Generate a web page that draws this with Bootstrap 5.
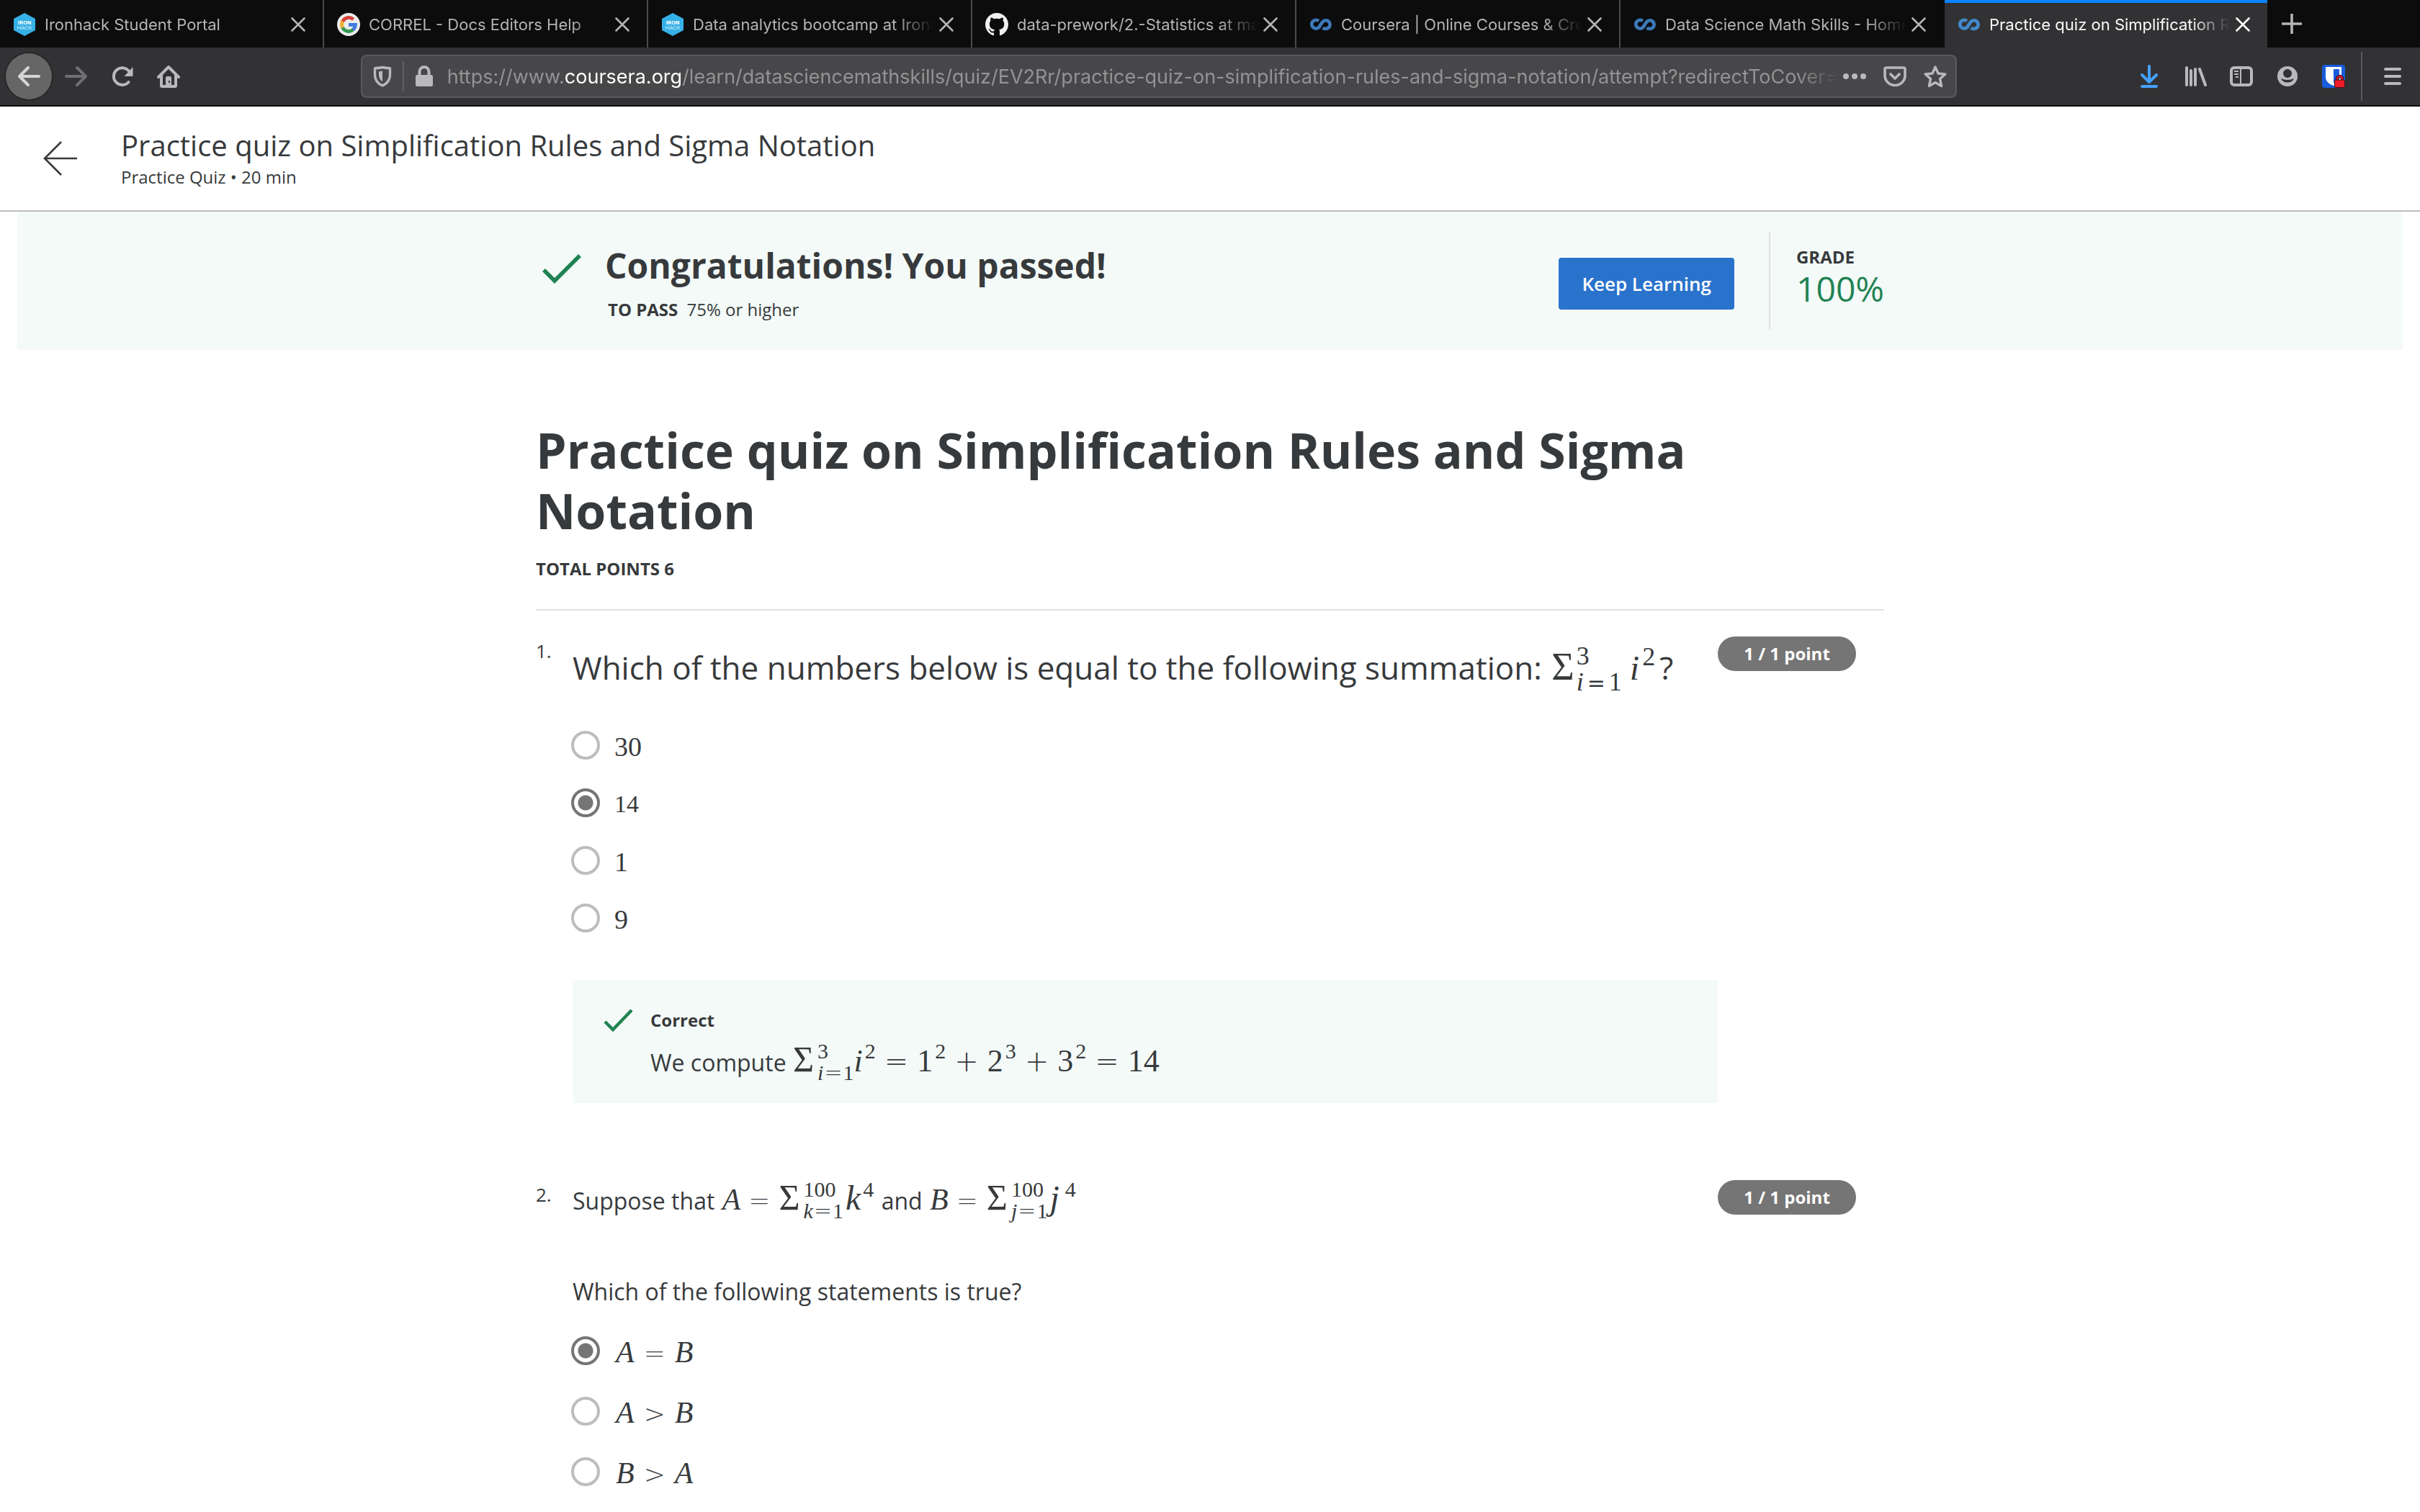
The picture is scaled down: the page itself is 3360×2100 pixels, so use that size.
<!DOCTYPE html>
<html lang="en">
<head>
<meta charset="utf-8">
<meta name="viewport" content="width=device-width, initial-scale=1">
<title>Practice quiz on Simplification Rules and Sigma Notation</title>
<link rel="stylesheet" href="https://cdn.jsdelivr.net/npm/bootstrap@5.3.0/dist/css/bootstrap.min.css">
<style>
  body { font-family: "Open Sans", sans-serif; color: #373a3c; background: #fff; overflow-x: hidden; }
  .browser { font-family: Inter, "Liberation Sans", sans-serif; }
  .browser button { background: none; border: 0; padding: 0; color: inherit; }
  svg { display: block; flex: none; }

  .tabstrip { height: 66px; background: #0c0c0d; color: #b4b4b6; }
  .btab { flex: 0 1 450px; min-width: 0; padding: 2px 24px 0 18px; border-right: 2px solid #4a4a4d; font-size: 22px; line-height: 32px; }
  .btab.before-current { border-right-color: transparent; }
  .btab.current { flex-basis: 448px; border-right: 0; background: #323234; color: #f9f9fa; box-shadow: inset 0 4px #0a84ff; }
  .tab-title { flex: 1 1 0; min-width: 0; overflow: hidden; white-space: nowrap; margin-left: 12px; color: inherit; text-decoration: none; -webkit-mask-image: linear-gradient(to right, #000 84%, transparent); mask-image: linear-gradient(to right, #000 84%, transparent); }
  .tab-close { color: #fff; margin-left: 8px; }
  .new-tab { padding-left: 20px !important; color: #b4b4b6; }

  .toolbar { height: 82px; background: #323234; border-bottom: 2px solid #0c0c0d; padding-right: 6px; color: #b9b9bb; }
  .tool { width: 64px; height: 64px; display: flex; align-items: center; justify-content: center; flex: none; }
  .browser .tool-back { background: #666667; border-radius: 50%; margin: 0 2px 0 8px; color: #d6d6d7; box-shadow: 0 0 0 2px #28282a; }
  .tool-off { color: #707072 !important; }
  .spring { flex: 0 0 7%; }
  .urlbar { height: 60px; background: #474749; border: 2px solid #5a5a5c; border-radius: 8px; padding: 0 12px; min-width: 0; }
  .url-line { width: 2px; height: 42px; background: #5c6069; margin: 0 12px; }
  .url-text { min-width: 0; overflow: hidden; white-space: nowrap; font-size: 27px; line-height: 40px; padding-top: 2px; color: #939395; margin: 0 6px 0 16px; outline: 0; -webkit-mask-image: linear-gradient(to right, #000 97%, transparent); mask-image: linear-gradient(to right, #000 97%, transparent); }
  .url-text b { font-weight: 400; color: #fff; }
  .url-icons { gap: 24px; }
  .tool-line { width: 2px; height: 68px; background: #5a5a5c; margin: 0 10px 0 6px; }

  .page-head { height: 146px; border-bottom: 2px solid #bdbdbd; padding: 0 56px; }
  .head-text { margin-left: 56px; padding-bottom: 4px; }
  .head-title { font-size: 40px; line-height: 56px; font-weight: 400; margin: 0; }
  .small-line { font-size: 24px; line-height: 32px; margin: 0; }
  .result { background: #f4faf8; margin: 0 24px; height: 192px; padding-top: 28px; }
  .sheet { width: 100%; max-width: 1872px; margin: 0 auto; }
  .result-check { margin: 26px 0 0 8px; }
  .result-text { margin: 15px 0 0 32px; }
  .result-title { font-size: 48px; line-height: 64px; font-weight: 700; margin: 0 0 13px; }
  .pass-label { margin-right: 6px; }
  .btn-keep { --bs-btn-bg: #2a73cc; --bs-btn-color: #fff; --bs-btn-hover-bg: #1f5fae; --bs-btn-hover-color: #fff; --bs-btn-border-width: 0; --bs-btn-border-radius: 4px; font-size: 26px; line-height: 36px; font-weight: 600; padding: 18px 32px; margin: 36px 48px 0 0; }
  .grade { height: 136px; border-left: 2px solid #dfe1e1; padding: 19px 0 0 36px; }
  .grade-num { font-size: 48px; line-height: 56px; color: #1f8354; margin: 0; }

  .quiz-title { font-size: 68px; line-height: 84px; font-weight: 700; margin: 97px 0 23px; }
  .total { border-bottom: 2px solid #e1e1e1; height: 74px; }
  .question { display: grid; grid-template-columns: 51px minmax(0, 1fr) 231px; margin-bottom: 71px; }
  .q-num { font-size: 26px; line-height: 36px; margin-top: 38px; }
  .q-body { min-width: 0; }
  .q-pill { width: 192px; height: 48px; border-radius: 24px; background: #757575; color: #fff; font-size: 24px; line-height: 48px; font-weight: 700; text-align: center; margin-top: 36px; }
  .q-large { font-size: 44px; line-height: 60px; margin: 45px 0 30px; }
  .q-text { font-size: 32px; line-height: 44px; margin: 0; }
  .q-math { margin: 34px 0 75px; }
  .q-ask { margin-bottom: 18px; }
  .choice { display: flex; align-items: center; height: 80px; margin-left: -2px; }
  .choice-tall { height: 84px; }
  .choice input { appearance: none; -webkit-appearance: none; width: 40px; height: 40px; margin: 0 20px 0 0; border: 4px solid #bdbdbd; border-radius: 50%; flex: none; }
  .choice input:checked { border-color: #757575; background: radial-gradient(circle, #757575 10px, transparent 11px); }
  .choice label { line-height: 40px; padding-top: 4px; }
  .choice-tall label { padding-left: 2px; }
  .feedback { background: #f4faf8; margin-top: 46px; padding: 40px 40px 27px 42px; }
  .feedback-body { margin-left: 18px; }
  .feedback-text { margin: 12px 0 0; }

  .tex { font-family: "Liberation Serif", serif; white-space: nowrap; line-height: 1; }
  .tex i, .tex span { line-height: 1; }
  .tex38 { font-size: 38px; }
  .tex34 { font-size: 34px; }
  .tex42 { font-size: 42px; }
  .tex44 { font-size: 44px; }
  .tex48 { font-size: 48px; }
  .tex-word { margin: 0 2px; }
  .sigma { font-size: 50px; margin-left: 1px; }
  .sigma-lg { font-size: 54px; margin-left: 2px; }
  .op { font-family: "DejaVu Sans", sans-serif; font-weight: 200; font-size: 36px; margin: 0 11px; }
  .choice .op { margin: 0 13px; }
  .tex .op-lg { font-size: 40px; margin: 0 12px; }
  .tex .op-sm { font-size: 30px; margin: 0 1px; }
  .tex .op-md { font-size: 30px; margin: 0 5px; font-weight: 400; }
  .limits { display: inline-flex; flex-direction: column; font-size: 30px; vertical-align: 18px; margin-left: 5px; }
  .tex .limits > span { line-height: 30px; }
  .limits-wide { margin-right: 3px; }
  .limits-lg { font-size: 36px; vertical-align: 21px; margin-left: 3px; }
  .tex .limits-lg > span { line-height: 36px; }
  .pow { font-size: 30px; vertical-align: 18px; margin-left: 3px; }
  .pow-j { margin-left: 8px; }
  .pow-lg { font-size: 36px; vertical-align: 20px; margin: 0 6px 0 4px; }
</style>
<script src="https://cdn.jsdelivr.net/npm/bootstrap@5.3.0/dist/js/bootstrap.bundle.min.js"></script>
</head>
<body>

<svg class="d-none" aria-hidden="true">
  <symbol id="x" viewBox="0 0 20 20"><path d="M1.500 1.500l17 17M18.500 1.500l-17 17" fill="none" stroke="currentColor" stroke-width="2.600" stroke-linecap="round"/></symbol>
  <symbol id="hex" viewBox="0 0 32 32"><path d="M16 0l15 8v16l-15 8L1 24V8z" fill="#36b0e6"/><text x="16" y="15.500" font-size="8" font-weight="700" fill="#fff" text-anchor="middle" font-family="Roboto, sans-serif">IRON</text><text x="16" y="22.500" font-size="8" font-weight="300" fill="#fff" text-anchor="middle" font-family="Roboto, sans-serif">HACK</text></symbol>
  <symbol id="coursera" viewBox="0 0 32 32"><path d="M12.800 11.200A5.800 5.800 0 1 0 12.600 20.300C15 18.500 16.500 13.500 19.200 11.600A5.800 5.800 0 1 1 18.800 20.400" fill="none" stroke="currentColor" stroke-width="4.800"/></symbol>
</svg>

<header class="browser">
  <div class="tabstrip d-flex">
    <div class="btab d-flex align-items-center"><svg width="32" height="32"><use href="#hex"/></svg><a class="tab-title" href="#">Ironhack Student Portal</a><button class="tab-close" aria-label="Close tab"><svg width="20" height="20"><use href="#x"/></svg></button></div>
    <div class="btab d-flex align-items-center"><svg width="32" height="32" viewBox="0 0 32 32"><circle cx="16" cy="16" r="16" fill="#ececec"/><g fill="none" stroke-width="4.800"><path d="M7.600 12A9.500 9.500 0 0 1 22.700 8.900" stroke="#d8433a"/><path d="M7.700 20.500a9.500 9.500 0 0 1 0-9" stroke="#eeb02e"/><path d="M22.500 23A9.500 9.500 0 0 1 7.600 20.200" stroke="#359a52"/><path d="M16 16.300h9.500a9.500 9.500 0 0 1-3.400 7" stroke="#3f7ae0"/></g></svg><a class="tab-title" href="#">CORREL - Docs Editors Help</a><button class="tab-close" aria-label="Close tab"><svg width="20" height="20"><use href="#x"/></svg></button></div>
    <div class="btab d-flex align-items-center"><svg width="32" height="32"><use href="#hex"/></svg><a class="tab-title" href="#">Data analytics bootcamp at Ironhack</a><button class="tab-close" aria-label="Close tab"><svg width="20" height="20"><use href="#x"/></svg></button></div>
    <div class="btab d-flex align-items-center"><svg width="32" height="32" viewBox="0 0 16 16"><path fill="#f0f0f0" d="M8 0C3.580 0 0 3.580 0 8c0 3.540 2.290 6.530 5.470 7.590.4.070.55-.17.55-.38 0-.19-.01-.82-.01-1.490-2.010.37-2.530-.49-2.690-.94-.09-.23-.48-.94-.82-1.130-.28-.15-.68-.52-.01-.53.63-.01 1.080.58 1.230.82.720 1.210 1.870.87 2.330.66.070-.52.280-.87.510-1.070-1.780-.2-3.640-.89-3.640-3.950 0-.87.310-1.590.82-2.150-.08-.2-.36-1.020.08-2.120 0 0 .67-.21 2.200.82.640-.18 1.320-.27 2-.27s1.360.09 2 .27c1.530-1.040 2.200-.82 2.200-.82.440 1.100.160 1.920.080 2.120.510.560.820 1.270.820 2.150 0 3.070-1.870 3.750-3.650 3.950.290.250.540.730.540 1.480 0 1.070-.01 1.930-.01 2.200 0 .21.150.46.550.38A8.010 8.010 0 0 0 16 8c0-4.420-3.580-8-8-8z"/></svg><a class="tab-title" href="#">data-prework/2.-Statistics at master</a><button class="tab-close" aria-label="Close tab"><svg width="20" height="20"><use href="#x"/></svg></button></div>
    <div class="btab d-flex align-items-center"><svg width="32" height="32" color="#3c79b9"><use href="#coursera"/></svg><a class="tab-title" href="#">Coursera | Online Courses &amp; Credentials</a><button class="tab-close" aria-label="Close tab"><svg width="20" height="20"><use href="#x"/></svg></button></div>
    <div class="btab before-current d-flex align-items-center"><svg width="32" height="32" color="#3c79b9"><use href="#coursera"/></svg><a class="tab-title" href="#">Data Science Math Skills - Home</a><button class="tab-close" aria-label="Close tab"><svg width="20" height="20"><use href="#x"/></svg></button></div>
    <div class="btab current d-flex align-items-center"><svg width="32" height="32" color="#4189cb"><use href="#coursera"/></svg><a class="tab-title" href="#">Practice quiz on Simplification Rules</a><button class="tab-close" aria-label="Close tab"><svg width="20" height="20"><use href="#x"/></svg></button></div>
    <button class="new-tab" aria-label="New tab"><svg width="28" height="28" viewBox="0 0 28 28"><path d="M14 1v26M1 14h26" stroke="currentColor" stroke-width="3.600" stroke-linecap="round"/></svg></button>
  </div>

  <div class="toolbar d-flex align-items-center">
    <button class="tool tool-back" aria-label="Back"><svg width="32" height="32" viewBox="0 0 32 32" fill="none" stroke="currentColor" stroke-width="4" stroke-linecap="round" stroke-linejoin="round"><path d="M30 16H3M15 4L3 16l12 12"/></svg></button>
    <button class="tool tool-off" aria-label="Forward"><svg width="32" height="32" viewBox="0 0 32 32" fill="none" stroke="currentColor" stroke-width="4" stroke-linecap="round" stroke-linejoin="round"><path d="M2 16h27M17 4l12 12-12 12"/></svg></button>
    <button class="tool" aria-label="Reload"><svg width="32" height="32" viewBox="0 0 32 32"><path d="M24.500 24A11.800 11.800 0 1 1 25.500 9.500" fill="none" stroke="currentColor" stroke-width="4" stroke-linecap="round"/><path d="M30.500 3v12a1 1 0 0 1-1 1h-11z" fill="currentColor"/></svg></button>
    <button class="tool" aria-label="Home"><svg width="32" height="32" viewBox="0 0 32 32"><path d="M2 17L16 3l14 14" fill="none" stroke="currentColor" stroke-width="4" stroke-linecap="round" stroke-linejoin="round"/><path d="M6 14v15a1 1 0 0 0 1 1h18a1 1 0 0 0 1-1V14" fill="none" stroke="currentColor" stroke-width="4"/><path d="M12 18a2 2 0 0 1 2-2h4a2 2 0 0 1 2 2v12h-8z" fill="currentColor"/><path d="M16 22h2v3h-2z" fill="#323234"/></svg></button>
    <div class="spring"></div>
    <div class="urlbar d-flex align-items-center flex-fill">
      <svg width="32" height="32" viewBox="0 0 32 32"><path d="M16 3.500c4 1 7 1.200 10.500 1.200V14c0 7-4 12-10.500 15C9.500 26 5.500 21 5.500 14V4.700C9 4.700 12 4.500 16 3.500z" fill="none" stroke="currentColor" stroke-width="3.400" stroke-linejoin="round"/><path d="M16 8.500v15c-3.500-2.500-5-5.500-5-9.500V9.300z" fill="currentColor"/></svg>
      <div class="url-line"></div>
      <svg width="32" height="32" viewBox="0 0 32 32"><path d="M9.500 15V9.500a6.500 6.500 0 0 1 13 0V15" fill="none" stroke="currentColor" stroke-width="4"/><rect x="4" y="14" width="24" height="16" rx="2.500" fill="currentColor"/></svg>
      <div class="url-text flex-fill" role="textbox" aria-label="Address">https://www.<b>coursera.org</b>/learn/datasciencemathskills/quiz/EV2Rr/practice-quiz-on-simplification-rules-and-sigma-notation/attempt?redirectToCover=true</div>
      <div class="url-icons d-flex">
        <button aria-label="Page actions"><svg width="32" height="32" viewBox="0 0 32 32" fill="currentColor"><circle cx="4" cy="16" r="4"/><circle cx="16" cy="16" r="4"/><circle cx="28" cy="16" r="4"/></svg></button>
        <button aria-label="Save to Pocket"><svg width="32" height="32" viewBox="0 0 32 32" fill="none" stroke="currentColor" stroke-linecap="round" stroke-linejoin="round"><path d="M4 4h24a2 2 0 0 1 2 2v9a14 13.500 0 0 1-28 0V6a2 2 0 0 1 2-2z" stroke-width="3.600"/><path d="M10 13l6 6 6-6" stroke-width="3.600"/></svg></button>
        <button aria-label="Bookmark this page"><svg width="32" height="32" viewBox="0 0 32 32"><path d="M16 3l4 9 9.800 1-7.300 6.600 2.100 9.900L16 24.500l-8.600 5 2.100-9.900L2.200 13l9.800-1z" fill="none" stroke="currentColor" stroke-width="3.400" stroke-linejoin="round"/></svg></button>
      </div>
    </div>
    <div class="spring"></div>
    <button class="tool" aria-label="Downloads"><svg width="32" height="32" viewBox="0 0 32 32" fill="none" stroke="#45a1ff" stroke-width="4" stroke-linecap="round" stroke-linejoin="round"><path d="M16 2v22M6 14l10 10 10-10M6 30h20"/></svg></button>
    <button class="tool" aria-label="Library"><svg width="32" height="32" viewBox="0 0 32 32" stroke="currentColor" stroke-width="4" stroke-linecap="round"><path d="M4 4v24M10 8v20M16 6v22M22 6l8 22" fill="none"/></svg></button>
    <button class="tool" aria-label="Sidebars"><svg width="32" height="32" viewBox="0 0 32 32" fill="none" stroke="currentColor"><rect x="2" y="4" width="28" height="24" rx="4" stroke-width="4"/><path d="M15 4v24M6 9h6M6 13h6M8 17h4" stroke-width="2"/></svg></button>
    <button class="tool" aria-label="Account"><svg width="32" height="32" viewBox="0 0 32 32"><circle cx="16" cy="16" r="14" fill="currentColor"/><circle cx="16" cy="12" r="6" fill="#323234"/><path d="M7 19c3 1 5.500 2 9 2s6-1 9-2c-1.500 3.800-5 5.500-9 5.500S8.500 22.800 7 19z" fill="#323234"/></svg></button>
    <button class="tool" aria-label="Bitwarden"><svg width="32" height="32" viewBox="0 0 32 32"><rect width="32" height="32" rx="4" fill="#175ddc"/><path d="M5 3h22v14c0 6-5 10-11 12C10 27 5 23 5 17z" fill="#fff"/><path d="M16 6h8v11c0 4-3 6.500-8 8.500z" fill="#175ddc"/><path d="M21 22v-2.500a3.500 3.500 0 0 1 7 0V22" fill="none" stroke="#42151f" stroke-width="4.500"/><path d="M21 22v-2.500a3.500 3.500 0 0 1 7 0V22" fill="none" stroke="#ee1c25" stroke-width="2"/><rect x="17.500" y="21" width="14" height="10.500" rx="1.500" fill="#ee1c25" stroke="#42151f"/></svg></button>
    <div class="tool-line"></div>
    <button class="tool" aria-label="Menu"><svg width="32" height="32" viewBox="0 0 32 32" stroke="currentColor" stroke-width="4" stroke-linecap="round"><path d="M6 6h20M6 16h20M6 26h20"/></svg></button>
  </div>
</header>

<div class="page-head d-flex align-items-center">
  <a href="#" aria-label="Back"><svg width="56" height="56" viewBox="0 0 56 56" fill="none" stroke="#373a3c" stroke-width="2.600"><path d="M51 28H6M29 5L6 28l23 23"/></svg></a>
  <div class="head-text">
    <h2 class="head-title">Practice quiz on Simplification Rules and Sigma Notation</h2>
    <p class="small-line">Practice Quiz • 20 min</p>
  </div>
</div>

<section class="result">
  <div class="sheet d-flex align-items-start">
    <svg class="result-check" width="56" height="52" viewBox="0 0 56 52" fill="none" stroke="#1f8354" stroke-width="5.500"><path d="M3 27l15 15L53 7"/></svg>
    <div class="result-text me-auto">
      <h2 class="result-title">Congratulations! You passed!</h2>
      <p class="small-line ps-1"><strong class="pass-label">TO PASS</strong> 75% or higher</p>
    </div>
    <button class="btn btn-keep">Keep Learning</button>
    <div class="grade">
      <p class="small-line fw-bold">GRADE</p>
      <p class="grade-num">100%</p>
    </div>
  </div>
</section>

<main class="sheet">
  <h1 class="quiz-title">Practice quiz on Simplification Rules and Sigma Notation</h1>
  <p class="small-line total fw-bold">TOTAL POINTS 6</p>

  <section class="question">
    <div class="q-num">1.</div>
    <div class="q-body">
      <p class="q-large" id="q1">Which of the numbers below is equal to the following summation: <span class="tex"><span class="sigma-lg">Σ</span><span class="limits limits-lg"><span>3</span><span><i>i</i><span class="op op-md">=</span>1</span></span> <i class="tex48">i</i><span class="pow-lg">2</span></span>?</p>
      <div role="radiogroup" aria-labelledby="q1">
        <div class="choice"><input type="radio" name="q1" id="q1a"><label for="q1a" class="tex tex38">30</label></div>
        <div class="choice"><input type="radio" name="q1" id="q1b" checked><label for="q1b" class="tex tex34">14</label></div>
        <div class="choice"><input type="radio" name="q1" id="q1c"><label for="q1c" class="tex tex38">1</label></div>
        <div class="choice"><input type="radio" name="q1" id="q1d"><label for="q1d" class="tex tex38">9</label></div>
      </div>
      <div class="feedback d-flex">
        <svg width="48" height="32" viewBox="0 0 48 32" fill="none" stroke="#1f8354" stroke-width="4.500"><path d="M3 18l11 11L40 2"/></svg>
        <div class="feedback-body">
          <p class="small-line fw-bold">Correct</p>
          <p class="q-text feedback-text">We compute <span class="tex tex44"><span class="sigma">Σ</span><span class="limits"><span>3</span><span><i>i</i><span class="op op-sm">=</span>1</span></span><i>i</i><span class="pow">2</span><span class="op op-lg">=</span>1<span class="pow">2</span><span class="op op-lg">+</span>2<span class="pow">3</span><span class="op op-lg">+</span>3<span class="pow">2</span><span class="op op-lg">=</span>14</span></p>
        </div>
      </div>
    </div>
    <div class="q-pill">1 / 1 point</div>
  </section>

  <section class="question mb-0">
    <div class="q-num">2.</div>
    <div class="q-body">
      <p class="q-text q-math">Suppose that <span class="tex tex42 tex-word"><i>A</i><span class="op">=</span><span class="sigma">Σ</span><span class="limits limits-wide"><span>100</span><span><i>k</i><span class="op op-sm">=</span>1</span></span><i class="tex48">k</i><span class="pow">4</span></span> and <span class="tex tex42 tex-word"><i>B</i><span class="op">=</span><span class="sigma">Σ</span><span class="limits limits-wide"><span>100</span><span><i>j</i><span class="op op-sm">=</span>1</span></span><i class="tex48">j</i><span class="pow pow-j">4</span></span></p>
      <p class="q-text q-ask" id="q2">Which of the following statements is true?</p>
      <div role="radiogroup" aria-labelledby="q2">
        <div class="choice choice-tall"><input type="radio" name="q2" id="q2a" checked><label for="q2a" class="tex tex42"><i>A</i><span class="op">=</span><i>B</i></label></div>
        <div class="choice choice-tall"><input type="radio" name="q2" id="q2b"><label for="q2b" class="tex tex42"><i>A</i><span class="op">&gt;</span><i>B</i></label></div>
        <div class="choice choice-tall"><input type="radio" name="q2" id="q2c"><label for="q2c" class="tex tex42"><i>B</i><span class="op">&gt;</span><i>A</i></label></div>
      </div>
    </div>
    <div class="q-pill">1 / 1 point</div>
  </section>
</main>
</body>
</html>
